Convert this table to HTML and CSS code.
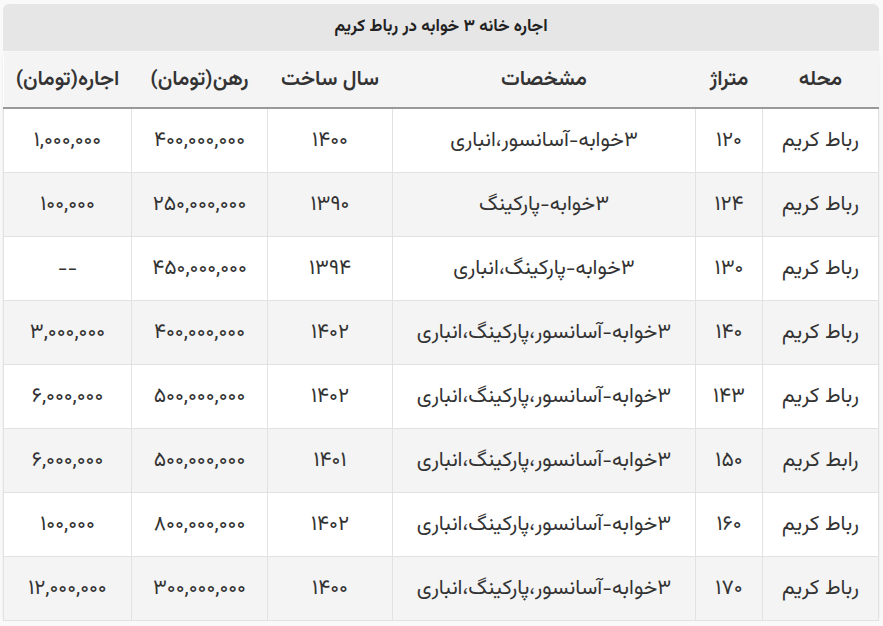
FILE: index.html
```html
<!DOCTYPE html>
<html lang="fa" dir="rtl">
<head>
<meta charset="utf-8">
<link rel="stylesheet" href="styles.css">
</head>
<body>
<div class="wrap">
<table class="rent">
<caption class="cap">اجاره خانه ۳ خوابه در رباط کریم</caption>
<colgroup>
<col class="c-area"><col class="c-size"><col class="c-spec"><col class="c-year"><col class="c-dep"><col class="c-rent">
</colgroup>
<thead>
<tr><th>محله</th><th>متراژ</th><th>مشخصات</th><th>سال ساخت</th><th>رهن(تومان)</th><th>اجاره(تومان)</th></tr>
</thead>
<tbody>
<tr><td>رباط کریم</td><td>۱۲۰</td><td>۳خوابه-آسانسور،انباری</td><td>۱۴۰۰</td><td>۴۰۰,۰۰۰,۰۰۰</td><td>۱,۰۰۰,۰۰۰</td></tr>
<tr><td>رباط کریم</td><td>۱۲۴</td><td>۳خوابه-پارکینگ</td><td>۱۳۹۰</td><td>۲۵۰,۰۰۰,۰۰۰</td><td>۱۰۰,۰۰۰</td></tr>
<tr><td>رباط کریم</td><td>۱۳۰</td><td>۳خوابه-پارکینگ،انباری</td><td>۱۳۹۴</td><td>۴۵۰,۰۰۰,۰۰۰</td><td>--</td></tr>
<tr><td>رباط کریم</td><td>۱۴۰</td><td>۳خوابه-آسانسور،پارکینگ،انباری</td><td>۱۴۰۲</td><td>۴۰۰,۰۰۰,۰۰۰</td><td>۳,۰۰۰,۰۰۰</td></tr>
<tr><td>رباط کریم</td><td>۱۴۳</td><td>۳خوابه-آسانسور،پارکینگ،انباری</td><td>۱۴۰۲</td><td>۵۰۰,۰۰۰,۰۰۰</td><td>۶,۰۰۰,۰۰۰</td></tr>
<tr><td>رابط کریم</td><td>۱۵۰</td><td>۳خوابه-آسانسور،پارکینگ،انباری</td><td>۱۴۰۱</td><td>۵۰۰,۰۰۰,۰۰۰</td><td>۶,۰۰۰,۰۰۰</td></tr>
<tr><td>رباط کریم</td><td>۱۶۰</td><td>۳خوابه-آسانسور،پارکینگ،انباری</td><td>۱۴۰۲</td><td>۸۰۰,۰۰۰,۰۰۰</td><td>۱۰۰,۰۰۰</td></tr>
<tr><td>رباط کریم</td><td>۱۷۰</td><td>۳خوابه-آسانسور،پارکینگ،انباری</td><td>۱۴۰۰</td><td>۳۰۰,۰۰۰,۰۰۰</td><td>۱۲,۰۰۰,۰۰۰</td></tr>
</tbody>
</table>
</div>
</body>
</html>
```
FILE: styles.css
```css
html, body {
  margin: 0;
  padding: 0;
  background: #f9f9f9;
}
body {
  font-family: "Vazirmatn", "DejaVu Sans", sans-serif;
  color: #333;
}
.wrap {
  padding: 4px 4px 0 4px;
}
.rent {
  width: 875px;
  border-collapse: collapse;
  table-layout: fixed;
  background: #fff;
  box-shadow: 0 1px 3px rgba(0,0,0,0.08);
  border-radius: 6px;
}
.cap {
  background: #e6e6e6;
  height: 47px;
  line-height: 47px;
  font-weight: bold;
  font-size: 17px;
  color: #222;
  border-radius: 6px 6px 0 0;
  padding: 0;
  margin-bottom: 1px;
}
.c-area { width: 116px; }
.c-size { width: 67px; }
.c-spec { width: 303px; }
.c-year { width: 125px; }
.c-dep { width: 136px; }
.c-rent { width: 128px; }
th {
  height: 55px;
  background: #f4f4f4;
  font-weight: 600;
  font-size: 21px;
  color: #333;
  border-bottom: 2px solid #999;
  text-align: center;
  padding: 0;
}
td {
  height: 63px;
  border: 1px solid #e2e2e2;
  text-align: center;
  font-size: 21px;
  color: #333;
  padding: 0;
}
tbody tr:nth-child(even) td {
  background: #f4f4f4;
}
tbody tr:first-child td {
  border-top: none;
}
```
